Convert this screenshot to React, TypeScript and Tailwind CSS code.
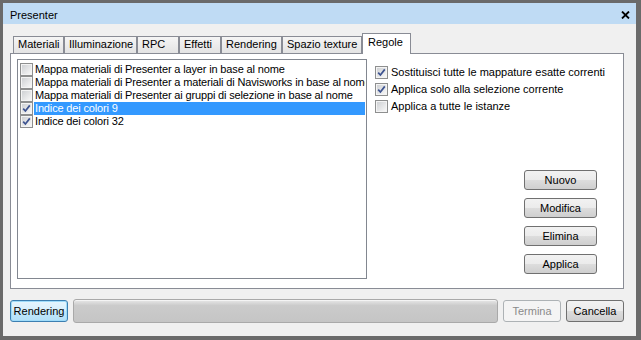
import React from 'react';

const Check = ({ checked }: { checked?: boolean }) => (
  <span className="relative block w-[13px] h-[13px] shrink-0 border border-[#8e8f8f] bg-[#f4f4f4] p-px">
    <span className="block w-full h-full bg-[linear-gradient(135deg,#cfd1d4,#f7f7f7)]" />
    {checked && (
      <svg className="absolute left-0 top-0" width="11" height="11" viewBox="0 0 11 11">
        <path d="M2.2 5.6 L4.4 8 L8.8 2.4" fill="none" stroke="#3d5390" strokeWidth="1.7" />
      </svg>
    )}
  </span>
);

const btn =
  'h-[20px] w-[73px] rounded-[3px] border border-[#707070] bg-[linear-gradient(to_bottom,#f2f2f2_0%,#ebebeb_50%,#dddddd_50%,#cfcfcf_100%)] flex items-center justify-center text-black';

const tabs = [
  { label: 'Materiali', w: 'w-[51px]' },
  { label: 'Illuminazione', w: 'w-[73px]' },
  { label: 'RPC', w: 'w-[42px]' },
  { label: 'Effetti', w: 'w-[42px]' },
  { label: 'Rendering', w: 'w-[61px]' },
  { label: 'Spazio texture', w: 'w-[80px]' },
];

const rows = [
  { text: 'Mappa materiali di Presenter a layer in base al nome', checked: false },
  { text: 'Mappa materiali di Presenter a materiali di Navisworks in base al nome', checked: false },
  { text: 'Mappa materiali di Presenter ai gruppi di selezione in base al nome', checked: false },
  { text: 'Indice dei colori 9', checked: true, selected: true },
  { text: 'Indice dei colori 32', checked: true },
];

const options = [
  { text: 'Sostituisci tutte le mappature esatte correnti', checked: true },
  { text: 'Applica solo alla selezione corrente', checked: true },
  { text: 'Applica a tutte le istanze', checked: false },
];

export default function App() {
  return (
    <div className="w-[641px] h-[340px] flex flex-col border-l-[3px] border-t-[3px] border-r-[5px] border-b-[4px] border-[#6a6a6a] font-['Liberation_Sans',Arial,sans-serif] text-[11px] text-black">
      {/* title bar */}
      <div className="h-[21px] shrink-0 bg-[#bfdbf4] flex items-center justify-between pl-[7px] pr-[6px]">
        <span className="leading-none pt-[3px]">Presenter</span>
        <svg width="9" height="8" viewBox="0 0 9 8" className="mt-[2px]">
          <path d="M1 0.5 L8 7.5 M8 0.5 L1 7.5" stroke="#000" strokeWidth="1.8" />
        </svg>
      </div>

      {/* body */}
      <div className="flex-1 bg-[#f0f0f0] pl-[7px] pr-[12px] pt-[9px]">
        {/* tabs */}
        <div className="relative z-10 h-[20px] ml-[3px] flex items-end">
          {tabs.map((t) => (
            <div
              key={t.label}
              className={`${t.w} h-[17px] border border-b-0 border-[#898c95] bg-[linear-gradient(to_bottom,#f5f5f5,#e3e3e3)] pl-[4px] leading-[15px] whitespace-nowrap`}
            >
              {t.label}
            </div>
          ))}
          <div className="w-[49px] h-[21px] -mb-px border border-b-0 border-[#898c95] bg-white pl-[5px] pt-[1px] leading-[15px]">
            Regole
          </div>
        </div>

        {/* panel */}
        <div className="h-[236px] border border-[#898c95] bg-white pl-[6px] pt-[5px] flex">
          <div className="w-[350px] h-[220px] border border-[#828790] bg-white pt-[3px] overflow-hidden">
            {rows.map((r) => (
              <div key={r.text} className="h-[13px] flex items-center">
                <span className="ml-[2px]">
                  <Check checked={r.checked} />
                </span>
                <div
                  className={`ml-px mr-px flex-1 h-[13px] pl-px leading-[13px] tracking-[-0.15px] whitespace-nowrap overflow-hidden ${
                    r.selected ? 'bg-[#3399ff] text-white' : ''
                  }`}
                >
                  {r.text}
                </div>
              </div>
            ))}
          </div>

          <div className="flex-1 h-[220px] pl-[8px] pt-[7px] flex flex-col justify-between pb-[5px]">
            <div className="flex flex-col gap-[4px]">
              {options.map((o) => (
                <div key={o.text} className="h-[13px] flex items-center gap-[3px] leading-[13px]">
                  <Check checked={o.checked} />
                  <span>{o.text}</span>
                </div>
              ))}
            </div>
            <div className="flex flex-col gap-[8px] self-end mr-[26px]">
              <div className={btn}>Nuovo</div>
              <div className={btn}>Modifica</div>
              <div className={btn}>Elimina</div>
              <div className={btn}>Applica</div>
            </div>
          </div>
        </div>

        {/* bottom row */}
        <div className="mt-[10px] h-[24px] flex items-center gap-[5px]">
          <div className="w-[58px] h-[22px] rounded-[3px] border border-[#3c7fb1] bg-[linear-gradient(to_bottom,#e6f5fd_0%,#d6effc_50%,#c3e7fb_50%,#b4e0f8_100%)] shadow-[inset_0_0_0_1px_#9fdcfa] flex items-center justify-center">
            Rendering
          </div>
          <div className="w-[425px] h-[24px] rounded-[3px] border border-[#a9a9a9] bg-[linear-gradient(to_bottom,#e8e8e8,#cbcbcb_25%,#c5c5c5)] shadow-[inset_0_1px_0_#f4f4f4]" />
          <div className="w-[58px] h-[22px] rounded-[3px] border border-[#adb2b5] bg-[#f4f4f4] text-[#8a8a8a] flex items-center justify-center">
            Termina
          </div>
          <div className="w-[58px] h-[22px] rounded-[3px] border border-[#707070] bg-[linear-gradient(to_bottom,#f2f2f2_0%,#ebebeb_50%,#dddddd_50%,#cfcfcf_100%)] flex items-center justify-center">
            Cancella
          </div>
        </div>
      </div>
    </div>
  );
}
